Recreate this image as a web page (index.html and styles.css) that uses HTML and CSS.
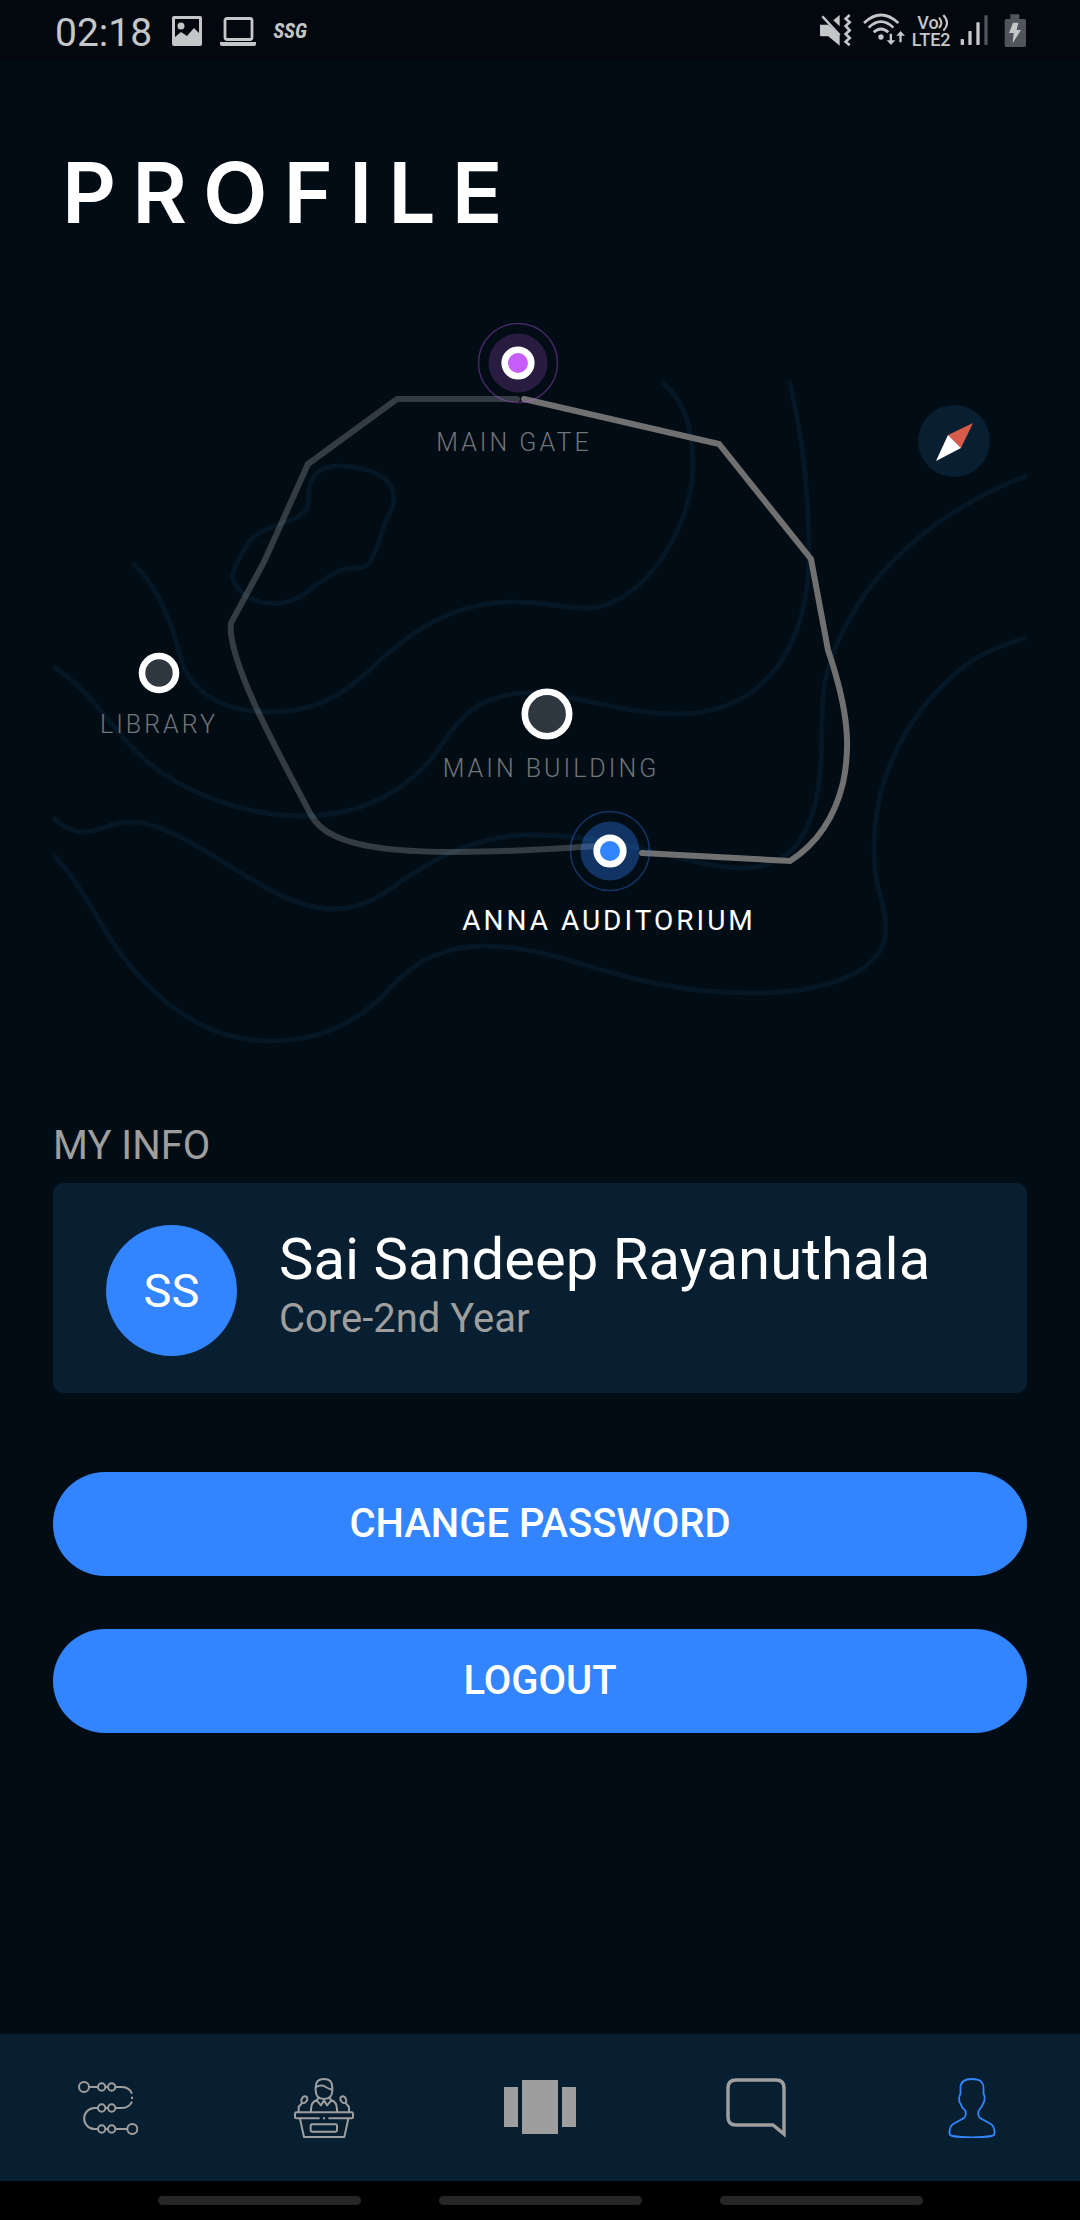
FILE: index.html
```html
<!DOCTYPE html>
<html lang="en">
<head>
<meta charset="utf-8">
<meta name="viewport" content="width=device-width, initial-scale=1">
<title>Profile</title>
<link rel="stylesheet" href="styles.css">
</head>
<body>
<header class="status">
  <div class="status-group">
    <span class="clock">02:18</span>
    <svg class="ic-image" viewBox="0 0 32 32" width="32" height="32" aria-hidden="true"><path fill="#c4c6c8" fill-rule="evenodd" d="M3 1h26q2 0 2 2v26q0 2-2 2H3q-2 0-2-2V3q0-2 2-2zM4 4v18l6-5 6 4 7-8 5 5V4zM10 7.500a3.500 3.500 0 1 1 0 7a3.500 3.500 0 1 1 0-7z"/></svg>
    <svg class="ic-laptop" viewBox="0 0 38 32" width="38" height="32" aria-hidden="true"><rect x="6" y="3.500" width="27" height="21" rx="2" fill="none" stroke="#c4c6c8" stroke-width="2.800"/><path fill="#c4c6c8" d="M1 27h36v2q0 2-2 2H3q-2 0-2-2z"/></svg>
    <span class="ssg">SSG</span>
  </div>
  <svg class="status-icons" viewBox="118 36 624 120" width="208" height="40" role="img" aria-label="Muted, Wi-Fi, LTE, signal, charging">
    <g fill="#c4c6c8">
      <path d="M121 77h25l34 32v31l-34-28h-21q-4 0-4-4zM180 48v34l-19-18z"/>
      <path d="M128 52l52 56" stroke="#c4c6c8" stroke-width="7"/>
      <path d="M210 48l-12 11 12 11-12 11 12 13-12 11 12 12-12 11 12 11" fill="none" stroke="#c4c6c8" stroke-width="8"/>
      <g fill="none" stroke="#c4c6c8" stroke-width="8"><path d="M253 72q51-48 103 0M267 86q37-36 74 0M282 100q22-20 44 0"/></g>
      <circle cx="304" cy="114" r="8"/>
      <path d="M330 104h7v20h10l-13 14-13-14h9zM359 130h7v-20h10l-13-14-13 14h9z"/>
      <text class="net" x="413" y="89">Vo</text>
      <text class="net" x="396" y="141">LTE2</text>
      <path d="M478 56q14 15 0 31M491 48q22 24 0 47" fill="none" stroke="#c4c6c8" stroke-width="6"/>
      <rect x="543" y="120" width="10" height="18" rx="2"/><rect x="566" y="96" width="10" height="42" rx="2"/><rect x="590" y="70" width="10" height="68" rx="2"/>
      <rect x="614" y="49" width="10" height="89" rx="2" fill="#50555b"/>
      <path fill="#50555b" d="M692 46h27v14h15q5 0 5 5v74q0 5-5 5h-54q-5 0-5-5V65q0-5 5-5h12z"/>
      <path d="M700 71h16l-5 22h13l-25 40 3-31h-14z"/>
    </g>
  </svg>
</header>

<main class="page">
  <h1 class="title">PROFILE</h1>

  <svg class="map" viewBox="53 303 974 760" role="img" aria-label="Campus map">
    <g class="contour">
      <path d="M340 466C355 466 365 469 373 472C390 479 395 490 393.500 502C392 512 387 516 384 526C380 537 377 549 374 554C369 565 366 568 356 568C342 568 335 572 322 581C306 592 296 603 277 603.500C262 604 252 600 245 595C235 587 231 580 233 573C236 563 242 553 247 545C253 534 266 529 278 525C290 521 305 516 308 505C311 493 305 485 317 473C323 467 331 466 340 466Z"/>
      <path d="M134 565C152 580 166 610 174 634C181 656 181 670 196 685C212 704 240 712 270 712C310 712 338 698 362 677C395 646 440 602 512 602C550 602 562 608 588 608C640 608 693 530 693 465C693 430 684 400 663 383"/>
      <path d="M50 665C70 676 86 693 100 710C114 726 125 742 142 757C180 792 245 816 303 816C355 816 395 798 428 763C450 738 463 694 527 693C570 693 625 714 676 714C770 714 809 640 809 553C809 490 801 430 790 383"/>
      <path d="M1030 475C950 503 880 560 848 622C815 680 824 710 821 760C818 820 800 868 743 868C690 868 630 836 535 835C480 834 440 855 400 882C385 893 365 909 333 909C265 909 190 822 130 822C110 822 100 832 83 832C72 832 62 827 50 815"/>
      <path d="M1030 637C1000 645 977 655 961 669C905 715 874 780 874 848C874 895 886 900 886 929C886 970 830 993 753 993C620 993 570 946 483 946C440 946 412 964 391 987C360 1022 320 1041 270 1041C190 1041 133 980 97 917C82 891 70 872 50 851"/>
    </g>
    <path class="route route-dim" d="M517 399H397L308 464L264 562L231 623Q228 645 255 705C272 742 290 775 311 815C330 850 400 860 597 846"/>
    <path class="route" d="M524 399L719 444L811 559L828 650C850 715 850 750 843 783C834 820 815 845 790 861L642 853"/>
    <g fill="#c65cf9"><circle cx="518" cy="363" r="39.500" fill="none" stroke="#c65cf9" stroke-opacity=".35" stroke-width="1.500"/><circle cx="518" cy="363" r="29.500" fill="#281c40"/><circle cx="518" cy="363" r="13.300" stroke="#fff" stroke-width="6.600"/></g>
    <g fill="#3385ff"><circle cx="610" cy="851" r="39.500" fill="none" stroke="#3385ff" stroke-opacity=".35" stroke-width="1.500"/><circle cx="610" cy="851" r="29.500" fill-opacity=".34"/><circle cx="610" cy="851" r="13.300" stroke="#fff" stroke-width="6.600"/></g>
    <g fill="#2f3840" stroke="#fff" stroke-width="6.600"><circle cx="159" cy="673" r="17"/><circle cx="547" cy="714" r="22.200"/></g>
    <circle cx="954" cy="441" r="36" fill="#071f30"/>
    <path fill="#d95b4b" d="M973 423L948 435L961 448Z"/><path fill="#fff" d="M936 461L948 435L961 448Z"/>
    <g class="place">
      <text x="514" y="451">MAIN GATE</text>
      <text x="159" y="733">LIBRARY</text>
      <text x="551" y="777">MAIN BUILDING</text>
      <text class="place-active" x="609" y="930">ANNA AUDITORIUM</text>
    </g>
  </svg>

  <h2 class="section">MY INFO</h2>
  <section class="card">
    <div class="avatar">SS</div>
    <div class="who">
      <p class="name">Sai Sandeep Rayanuthala</p>
      <p class="role">Core-2nd Year</p>
    </div>
  </section>

  <div class="actions">
    <button class="btn" type="button">CHANGE PASSWORD</button>
    <button class="btn" type="button">LOGOUT</button>
  </div>
</main>

<nav class="tabs">
  <a href="#timeline" aria-label="Timeline"><svg viewBox="113 172 180 180" width="60" height="60" fill="none" stroke="#9e9e9e" stroke-width="6"><circle cx="131" cy="199" r="15"/><circle cx="276" cy="325" r="15"/><g><circle cx="184" cy="199" r="11"/><circle cx="214" cy="199" r="11"/><circle cx="184" cy="262" r="11"/><circle cx="214" cy="262" r="11"/><circle cx="184" cy="325" r="11"/><circle cx="214" cy="325" r="11"/></g><path d="M147 199h26M225 199h20q23 1 30 20M275 228v7M275 243q-9 19-30 19h-20M195 199h8M195 262h8M195 325h8M173 262h-10a31.500 31.500 0 0 0 0 63h10M225 325h35"/></svg></a>
  <a href="#speakers" aria-label="Speakers"><svg viewBox="762 172 180 180" width="60" height="60" fill="none" stroke="#9e9e9e" stroke-width="6" stroke-linejoin="round"><path d="M827 200q0-25 25-25t25 25v9q0 26-25 26t-25-26zM828 199q18-9 29 0 8 5 19 8M836 231l-6 8 13 15 9-15 9 15 13-15-6-8M832 238q-19 5-19 28v8M872 238q19 5 19 28v8M769 275h166q4 0 4 4v10q0 4-4 4h-70M839 293h-70q-4 0-4-4v-10q0-4 4-4M849 293h6M780 294l12 55h121l12-55M816 311h71q4 0 4 4v14q0 4-4 4h-71q-4 0-4-4v-14q0-4 4-4z"/><ellipse cx="793" cy="237" rx="8" ry="11" transform="rotate(32 793 237)"/><ellipse cx="910" cy="237" rx="8" ry="11" transform="rotate(-32 910 237)"/><path d="M787 246l-11 13v16M916 246l11 13v16"/></svg></a>
  <a href="#home" aria-label="Home"><svg viewBox="0 0 72 60" width="72" height="60" fill="#9e9e9e"><path d="M0 9h14v40H0zM18 2h36v54H18zM58 9h14v40H58z"/></svg></a>
  <a href="#chat" aria-label="Chat"><svg viewBox="0 0 60 60" width="60" height="60" fill="none" stroke="#9e9e9e" stroke-width="3.500"><path d="M10 2h40q8 0 8 8v46L47 47H10q-8 0-8-8V10q0-8 8-8z"/></svg></a>
  <a href="#profile" aria-label="Profile" aria-current="page"><svg viewBox="0 0 60 60" width="60" height="60" fill="none" stroke="#3385ff" stroke-width="1.800"><path d="M30 1C21 1 18.500 5 18.500 10V16Q16.500 18 17.500 24Q19 26 20 29L23.500 33Q24.500 38 22 40L12 45.500Q7.500 48 7.500 54Q7 57 10 58Q30 61 50 58Q53 57 52.500 54Q52.500 48 48 45.500L38 40Q35.500 38 36.500 33L40 28L42 24Q43.500 18 41.500 16V10C41.500 5 39 1 30 1Z"/></svg></a>
</nav>
<div class="gestures"><span></span><span></span><span></span></div>
</body>
</html>
```
FILE: styles.css
```css
* { box-sizing: border-box; }

body {
  margin: 0;
  min-height: 100vh;
  display: flex;
  flex-direction: column;
  background: #020c14;
  color: #fff;
  font-family: Roboto, "Liberation Sans", sans-serif;
}

h1, h2, p { margin: 0; font-weight: 400; }

.status {
  height: 62px;
  padding: 0 53px 0 55px;
  display: flex;
  align-items: center;
  justify-content: space-between;
  background: #02080e;
  color: #c4c6c8;
}
.status-group { display: flex; align-items: center; gap: 16px; }
.clock { font-size: 39px; line-height: 62px; padding-top: 4px; margin-right: 3px; }
.ssg { font: italic 700 21px/24px "Roboto Condensed", Roboto, "Liberation Sans", sans-serif; }
.net { font-size: 54px; font-weight: 500; }

.page { flex: 1; padding: 81px 53px 0; }
.title {
  padding-left: 9px;
  font-family: Inter, Roboto, sans-serif;
  font-size: 84px;
  font-weight: 600;
  line-height: 100px;
  letter-spacing: 16px;
}

.map { display: block; width: 100%; height: auto; margin-top: 60px; }
.contour { fill: none; stroke: #051624; stroke-width: 5; stroke-linecap: round; }
.route { fill: none; stroke: #707070; stroke-width: 6; stroke-linecap: round; }
.route-dim { stroke: #fff; stroke-opacity: .2; }
.place { font-size: 25px; font-weight: 300; letter-spacing: 3px; text-anchor: middle; fill: #70757a; }
.place-active { font-size: 28px; font-weight: 400; fill: #fff; }

.section { margin: 59px 0 13px; font-size: 40px; line-height: 48px; color: #9e9e9e; }

.card {
  display: flex;
  gap: 42px;
  padding: 42px 53px 37px;
  border-radius: 10px;
  background: #071f30;
}
.avatar {
  flex: none;
  width: 131px;
  height: 131px;
  border-radius: 50%;
  background: #3385ff;
  font-size: 47px;
  line-height: 131px;
  text-align: center;
}
.name { font-size: 58px; line-height: 68px; }
.role { font-size: 40px; line-height: 52px; color: #9e9e9e; }

.actions { display: grid; gap: 53px; margin: 79px 0 53px; }
.btn {
  height: 104px;
  padding: 0;
  border: 0;
  border-radius: 52px;
  background: #3385ff;
  color: #fff;
  font: 500 40px/48px Roboto, "Liberation Sans", sans-serif;
}

.tabs { height: 147px; display: grid; grid-template-columns: repeat(5, 1fr); background: #071f30; }
.tabs a { display: grid; place-items: center; }

.gestures {
  height: 39px;
  display: flex;
  align-items: center;
  justify-content: center;
  gap: 78px;
  background: #000;
}
.gestures span { width: 203px; height: 9px; border-radius: 5px; background: #262626; }
```
